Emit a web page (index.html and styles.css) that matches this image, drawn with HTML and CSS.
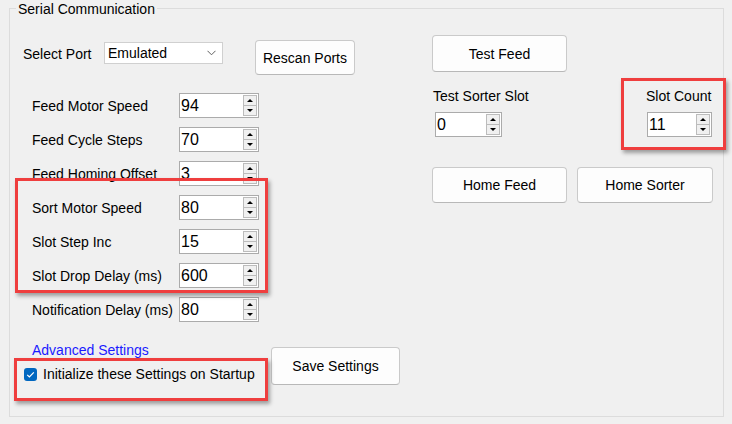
FILE: index.html
```html
<!DOCTYPE html>
<html>
<head>
<meta charset="utf-8">
<link rel="stylesheet" href="styles.css">
</head>
<body>
<fieldset class="group">
  <legend class="group-title">Serial Communication</legend>
  <div class="content">
    <div class="left">
      <div class="port-row">
        <span class="port-label">Select Port</span>
        <div class="select">
          <span>Emulated</span>
          <svg class="chev" width="9" height="6" viewBox="0 0 9 6"><polyline points="0.5,0.8 4.5,4.8 8.5,0.8" fill="none" stroke="#606060" stroke-width="1"/></svg>
        </div>
        <button class="btn btn-rescan">Rescan Ports</button>
      </div>
      <div class="fields">
        <div class="field"><span class="field-label">Feed Motor Speed</span><div class="spin"><span class="spin-val">94</span><div class="spin-btns"><span class="up"></span><span class="down"></span></div></div></div>
        <div class="field"><span class="field-label">Feed Cycle Steps</span><div class="spin"><span class="spin-val">70</span><div class="spin-btns"><span class="up"></span><span class="down"></span></div></div></div>
        <div class="field"><span class="field-label">Feed Homing Offset</span><div class="spin"><span class="spin-val">3</span><div class="spin-btns"><span class="up"></span><span class="down"></span></div></div></div>
        <div class="field"><span class="field-label">Sort Motor Speed</span><div class="spin"><span class="spin-val">80</span><div class="spin-btns"><span class="up"></span><span class="down"></span></div></div></div>
        <div class="field"><span class="field-label">Slot Step Inc</span><div class="spin"><span class="spin-val">15</span><div class="spin-btns"><span class="up"></span><span class="down"></span></div></div></div>
        <div class="field"><span class="field-label">Slot Drop Delay (ms)</span><div class="spin"><span class="spin-val">600</span><div class="spin-btns"><span class="up"></span><span class="down"></span></div></div></div>
        <div class="field"><span class="field-label">Notification Delay (ms)</span><div class="spin"><span class="spin-val">80</span><div class="spin-btns"><span class="up"></span><span class="down"></span></div></div></div>
      </div>
      <div class="bottom">
        <div class="bottom-left">
          <a class="link">Advanced Settings</a>
          <div class="check-row">
            <span class="checkbox"><svg width="13" height="13" viewBox="0 0 13 13"><polyline points="3.2,6.8 5.4,9 9.8,4.4" fill="none" stroke="#fff" stroke-width="1.2"/></svg></span>
            <span>Initialize these Settings on Startup</span>
          </div>
        </div>
        <button class="btn btn-save">Save Settings</button>
      </div>
    </div>
    <div class="right">
      <button class="btn btn-test">Test Feed</button>
      <div class="slots">
        <div class="slot-a">
          <div class="slot-label">Test Sorter Slot</div>
          <div class="spin spin-a"><span class="spin-val">0</span><div class="spin-btns"><span class="up"></span><span class="down"></span></div></div>
        </div>
        <div class="slot-b">
          <div class="slot-label">Slot Count</div>
          <div class="spin spin-b"><span class="spin-val">11</span><div class="spin-btns"><span class="up"></span><span class="down"></span></div></div>
        </div>
      </div>
      <div class="home-row">
        <button class="btn btn-home">Home Feed</button>
        <button class="btn btn-home2">Home Sorter</button>
      </div>
    </div>
  </div>
</fieldset>
<div class="mark mark-sort"></div>
<div class="mark mark-init"></div>
<div class="mark mark-count"></div>
</body>
</html>
```
FILE: styles.css
```css
html, body {
  margin: 0;
  padding: 0;
}
body {
  width: 732px;
  height: 424px;
  overflow: hidden;
  background: #f0f0f0;
  font-family: "Liberation Sans", Arial, sans-serif;
  font-size: 14px;
  color: #000;
  position: relative;
}
.group {
  box-sizing: border-box;
  margin: 0 0 0 9px;
  padding: 0;
  width: 715px;
  height: 417px;
  border: 1px solid #dcdcdc;
  min-width: 0;
}
.group-title {
  margin-left: 6px;
  padding: 1px 2px 0;
  line-height: 16px;
  font-size: 14px;
}
.content {
  display: flex;
  padding-left: 13px;
}
.left {
  width: 409px;
}
.port-row {
  display: flex;
  align-items: flex-start;
  margin-top: 23px;
  height: 35px;
}
.port-label {
  width: 81px;
  line-height: 16px;
  margin-top: 6px;
}
.select {
  box-sizing: border-box;
  width: 119px;
  height: 22px;
  background: #fff;
  border: 1px solid #d0d0d0;
  display: flex;
  align-items: center;
  justify-content: space-between;
  padding: 0 6px 0 3px;
  margin-top: 2px;
}
.btn {
  box-sizing: border-box;
  background: #fdfdfd;
  border: 1px solid #cacaca;
  border-bottom-color: #b8b8b8;
  border-radius: 4px;
  font-family: "Liberation Sans", Arial, sans-serif;
  font-size: 14px;
  color: #000;
  padding: 0;
}
.btn-rescan {
  margin-left: 32px;
  width: 100px;
  height: 35px;
}
.fields {
  margin-top: 18px;
  display: flex;
  flex-direction: column;
  gap: 9px;
}
.field {
  display: flex;
  align-items: center;
  height: 25px;
  padding-left: 9px;
}
.field-label {
  width: 147px;
}
.spin {
  box-sizing: border-box;
  width: 80px;
  height: 25px;
  background: #fff;
  border: 1px solid #ababab;
  display: flex;
}
.spin-val {
  flex: 1;
  font-size: 16px;
  line-height: 23px;
  padding-left: 1px;
}
.spin-btns {
  display: flex;
  flex-direction: column;
  width: 14px;
  margin: 1px 1px 1px 0;
}
.spin-btns span {
  flex: 1;
  box-sizing: border-box;
  border: 1px solid #bcbcbc;
  background: #f0f0f0;
  position: relative;
}
.spin-btns .down {
  border-top: none;
}
.spin-btns span::after {
  content: "";
  position: absolute;
  left: 3px;
  top: 3px;
  border-left: 3px solid transparent;
  border-right: 3px solid transparent;
}
.spin-btns .up::after {
  border-bottom: 3px solid #000;
}
.spin-btns .down::after {
  top: 3px;
  border-top: 3px solid #000;
}
.bottom {
  display: flex;
  align-items: flex-start;
  margin-top: 20px;
}
.bottom-left {
  width: 248px;
}
.link {
  display: block;
  margin-left: 9px;
  line-height: 16px;
  color: #1a1aff;
}
.check-row {
  display: flex;
  align-items: center;
  height: 16px;
  margin-top: 8px;
  gap: 6px;
  padding-left: 1px;
}
.checkbox {
  width: 13px;
  height: 13px;
  border-radius: 3px;
  background: #0067c0;
  display: flex;
}
.btn-save {
  margin-top: 5px;
  width: 129px;
  height: 38px;
}
.right {
  width: 281px;
  padding-top: 18px;
}
.btn-test {
  display: block;
  width: 135px;
  height: 37px;
}
.slots {
  display: flex;
  margin-top: 16px;
}
.slot-a {
  width: 213px;
}
.slot-label {
  line-height: 16px;
  padding-left: 1px;
}
.spin-a {
  width: 67px;
  margin: 8px 0 0 3px;
}
.spin-b {
  width: 65px;
  margin: 8px 0 0 2px;
}
.home-row {
  display: flex;
  gap: 10px;
  margin-top: 30px;
}
.btn-home {
  width: 135px;
  height: 36px;
}
.btn-home2 {
  width: 136px;
  height: 36px;
}
.mark {
  position: absolute;
  box-sizing: border-box;
  border: 3px solid #ef3e3e;
  box-shadow: 2px 3px 4px rgba(0, 0, 0, 0.35);
}
.mark-sort {
  left: 15px;
  top: 178px;
  width: 253px;
  height: 115px;
}
.mark-init {
  left: 14px;
  top: 358px;
  width: 254px;
  height: 43px;
}
.mark-count {
  left: 621px;
  top: 78px;
  width: 105px;
  height: 72px;
}
```
